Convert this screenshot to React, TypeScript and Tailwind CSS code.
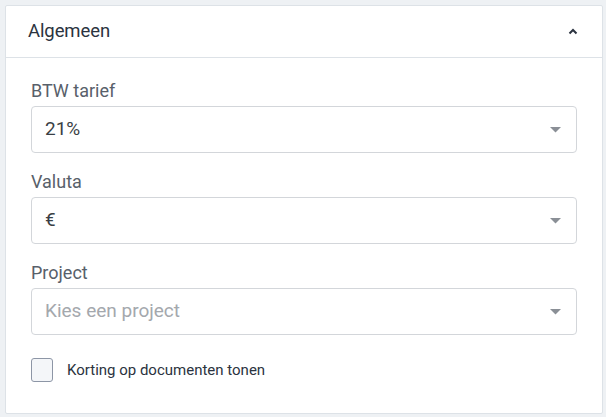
export default function App() {
  const Caret = () => (
    <svg width="11" height="6" viewBox="0 0 11 6" className="shrink-0">
      <path d="M0 0 L11 0 L5.5 5.5 Z" fill="#8a8f96" />
    </svg>
  );

  const Field = ({ label, value, placeholder }: { label: string; value?: string; placeholder?: string }) => (
    <div className="flex flex-col">
      <label className="text-[18px] leading-[20px] text-[#58606a] mb-[5px]">{label}</label>
      <div className="h-[47px] rounded-[4px] border border-[#d3d6da] bg-white flex items-center justify-between pl-[13px] pr-[15px]">
        {value ? (
          <span className="text-[19px] text-[#3a3f45]">{value}</span>
        ) : (
          <span className="text-[19px] text-[#a4a8ad]">{placeholder}</span>
        )}
        <Caret />
      </div>
    </div>
  );

  return (
    <div className="w-[606px] h-[417px] bg-[#eef1f4] pt-[5px] pl-[5px] font-['Roboto',sans-serif]">
      <div className="w-[598px] h-[409px] bg-white border border-[#dde2e7] rounded-[2px] flex flex-col">
        <div className="h-[52px] flex items-center justify-between pl-[22px] pr-[24px] border-b border-[#dde2e7]">
          <span className="text-[18.5px] text-[#2b3340] tracking-[-0.1px]">Algemeen</span>
          <svg width="10" height="7" viewBox="0 0 10 7">
            <path d="M1.5 5.5 L5 2 L8.5 5.5" stroke="#2b3340" strokeWidth="2" fill="none" />
          </svg>
        </div>
        <div className="flex flex-col gap-[19px] px-[25px] pt-[23px]">
          <Field label="BTW tarief" value="21%" />
          <Field label="Valuta" value="€" />
          <Field label="Project" placeholder="Kies een project" />
        </div>
        <div className="flex items-center gap-[14px] px-[25px] mt-[23px]">
          <div className="w-[22px] h-[24px] rounded-[3px] border border-[#8d96a6] bg-[#f4f6f9]" />
          <span className="text-[15px] text-[#2b3340]">Korting op documenten tonen</span>
        </div>
      </div>
    </div>
  );
}
